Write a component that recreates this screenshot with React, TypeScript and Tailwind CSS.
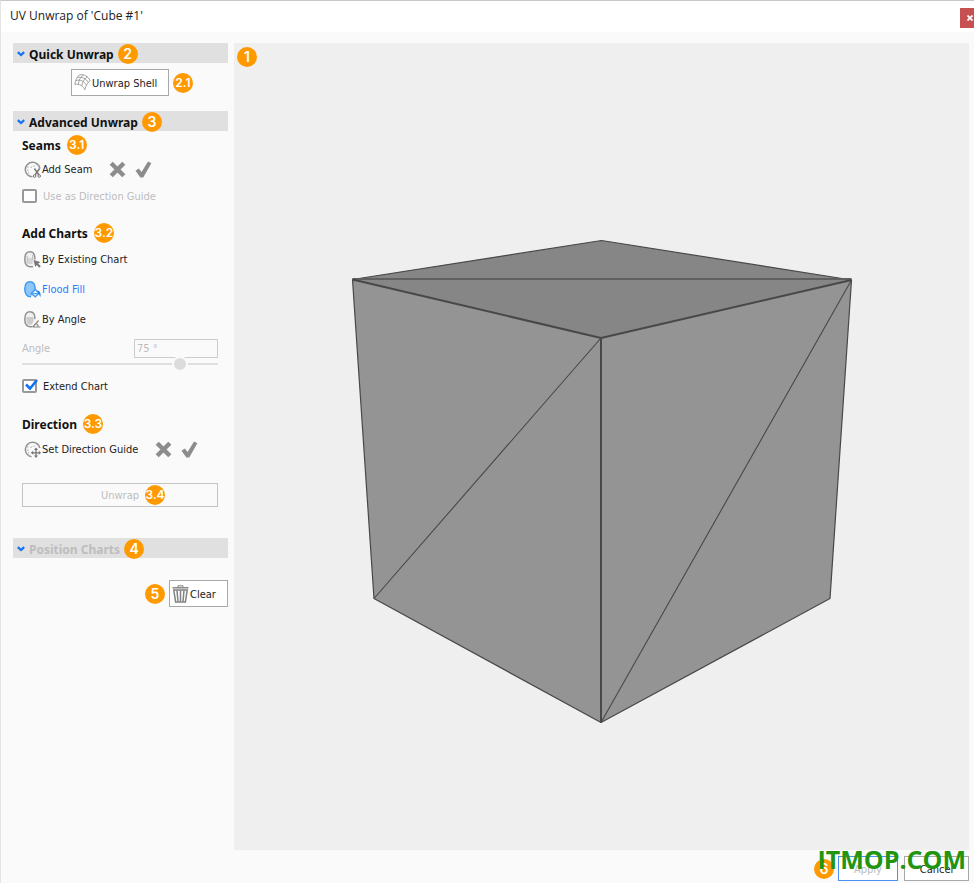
import React from 'react';

const Badge = ({ children, className = '' }: any) => (
  <span className={`inline-flex items-center justify-center shrink-0 w-5 h-5 rounded-full bg-[#ff9900] text-white font-['Inter',sans-serif] font-semibold leading-none ${String(children).length > 1 ? 'text-[12px]' : 'text-[14px]'} ${className}`}>
    {children}
  </span>
);

const SectionHeader = ({ title, badge, disabled, className = '' }: any) => (
  <div className={`flex items-center h-5 pt-0.5 bg-[#e0e0e0] ${className}`}>
    <button className={`flex items-center gap-1 pl-1 font-['Noto_Sans',sans-serif] font-bold text-[12px] ${disabled ? 'text-[#bdbdbd]' : 'text-[#111]'}`}>
      <svg width="8" height="6" viewBox="0 0 8 6" fill="none">
        <path d="M0.8 1.2 L4 4 L7.2 1.2" stroke="#1272f5" strokeWidth="2.2" />
      </svg>
      {title}
    </button>
    <Badge className="ml-1">{badge}</Badge>
  </div>
);

const SubHeading = ({ title, badge, className = '' }: any) => (
  <div className={`flex items-center gap-1.5 h-5 ${className}`}>
    <h3 className="font-['Noto_Sans',sans-serif] font-bold text-[12px]">{title}</h3>
    <Badge>{badge}</Badge>
  </div>
);

const ToolButton = ({ icon, label, active }: any) => (
  <button className={`flex items-center h-6 ml-0.5 gap-px ${active ? 'text-[#2b7cff]' : 'text-[#222]'}`}>
    {icon}
    <span className="pt-px">{label}</span>
  </button>
);

const CheckRow = ({ label, defaultChecked, disabled, className = '' }: any) => (
  <label className={`relative flex items-center gap-1.5 h-5 ${disabled ? 'text-[#bdbdbd]' : 'text-[#222]'} ${className}`}>
    <input type="checkbox" defaultChecked={defaultChecked} disabled={disabled} className="peer appearance-none w-[15px] h-[14px] border-2 border-[#999] rounded-xs bg-white" />
    <svg className="absolute left-0.5 top-0.5 hidden peer-checked:block" width="15" height="14" viewBox="0 0 15 14" fill="none">
      <path d="M2 6.5 L6 10.5 L13 2" stroke="#1272f5" strokeWidth="2.6" />
    </svg>
    <span className="pt-px">{label}</span>
  </label>
);

const CancelAccept = ({ target }: any) => (
  <div className="flex items-center gap-[9px] ml-[17px]">
    <button aria-label={`Discard ${target}`}>
      <svg width="17" height="17" viewBox="0 0 17 17" fill="none">
        <path d="M2.2 2.2 L14.8 14.8 M14.8 2.2 L2.2 14.8" stroke="#8c8c8c" strokeWidth="4.4" />
      </svg>
    </button>
    <button aria-label={`Accept ${target}`}>
      <svg width="17" height="17" viewBox="0 0 17 17">
        <path d="M0.5 9.8 L3.8 7.6 L6.6 11 L13 0.5 L16.4 2.2 L8.2 16.5 L5.4 16.5 Z" fill="#8c8c8c" />
      </svg>
    </button>
  </div>
);

const SeamIcon = () => (
  <svg width="17" height="17" viewBox="0 0 17 17" fill="none">
    <path d="M8.5 15.8 A7.3 7.3 0 1 1 15.8 7.5" stroke="#929292" strokeWidth="1.5" />
    <path d="M5 2.5 C3.2 5.5 3.2 10 5.5 13.5 M6.5 6.5 C9 4.8 11 5.6 12.5 3.6" stroke="#aaa" strokeDasharray="1.5 1.5" />
    <path d="M10.4 7.5 L15 14 M15.6 7.5 L11 14" stroke="#777" strokeWidth="1.5" />
    <circle cx="10.6" cy="15" r="1.3" stroke="#777" />
    <circle cx="15.2" cy="15" r="1.3" stroke="#777" />
  </svg>
);

const DirectionIcon = () => (
  <svg width="17" height="17" viewBox="0 0 17 17" fill="none">
    <path d="M7.5 15.7 A7.3 7.3 0 1 1 15.8 7" stroke="#929292" strokeWidth="1.5" />
    <path d="M5 2.5 C3.2 5.5 3.2 10 5.5 13.5 M6.5 6.5 C9 4.8 11 5.6 12.5 3.6" stroke="#aaa" strokeDasharray="1.5 1.5" />
    <path d="M12 7.5 V16 M7.8 11.8 H16.2" stroke="#777" strokeWidth="1.3" />
    <path d="M12 6.6 L14 9 H10 Z M12 17 L14 14.6 H10 Z M6.8 11.8 L9.2 9.8 V13.8 Z M17 11.8 L14.8 9.8 V13.8 Z" fill="#777" />
  </svg>
);

const ExistingIcon = () => (
  <svg width="17" height="17" viewBox="0 0 17 17" fill="none">
    <path d="M9 15.8 H6 C2.5 15.5 0.8 12.5 0.8 8 C0.8 3 2.8 0.8 6 0.8 C9.2 0.8 11 3 11 8.5" fill="#f0f0f0" stroke="#929292" strokeWidth="1.5" />
    <rect x="3.5" y="7" width="5" height="6" fill="#d5d5d5" />
    <path d="M3.2 5 V12 M8.6 4 V9" stroke="#bbb" />
    <path d="M9.5 9 L16.4 11 L14.1 12.4 L16.8 15.3 L15.2 16.7 L12.8 13.9 L11.2 16 Z" fill="#777" />
  </svg>
);

const FloodIcon = () => (
  <svg width="17" height="17" viewBox="0 0 17 17" fill="none">
    <path d="M7 15.8 C2.5 15.8 0.8 12.5 0.8 8 C0.8 3 2.8 0.8 6 0.8 C9.4 0.8 11 3 11.2 8" fill="#8fc6f8" stroke="#3f9af2" strokeWidth="1.5" />
    <path d="M11.2 8.5 L15 12 L11.3 15.8 L7.2 12.5 Z" fill="#e3f1fe" stroke="#3f9af2" strokeWidth="1.4" />
    <path d="M8.2 12.6 H14" stroke="#3f9af2" />
    <path d="M13 9.5 C15.8 9.8 17 11.8 16.5 16.2 L14.8 13" fill="#1e83ec" />
  </svg>
);

const AngleIcon = () => (
  <svg width="17" height="17" viewBox="0 0 17 17" fill="none">
    <path d="M8.5 15.8 H6 C2.5 15.5 0.8 12.5 0.8 8 C0.8 3 2.8 0.8 6 0.8 C9.2 0.8 11 3 11 8" fill="#f0f0f0" stroke="#929292" strokeWidth="1.5" />
    <path d="M2.4 6 H9.6 V10 L7.5 13.5 H4 C2.8 12 2.4 10 2.4 6 Z" fill="#ccc" />
    <path d="M8.8 16 L14.6 9.5 M8.8 16 H16.5 M12 12.2 C13.6 13 14.2 14.5 14.2 16" stroke="#888" strokeWidth="1.2" />
  </svg>
);

const ShellIcon = () => (
  <svg width="17" height="17" viewBox="0 0 17 17" fill="none" stroke="#999" strokeWidth="0.9">
    <path d="M0.8 10.5 C1.2 7 2.8 3 5.4 0.8 C10 0.2 14 2 16.2 6.8 C13.8 8.2 11.8 11 10.8 15.8 C9.4 12.4 5.4 9.2 0.8 10.5 Z" />
    <path d="M4.4 10.3 C4.6 6.4 6.4 3 9.4 1 M7.8 11.8 C8.2 8.2 10.2 5 13.4 2.8 M1.8 6.6 C6.5 5.2 10.4 7.6 12.3 10.8 M3.2 3.4 C8 2.4 12.2 4.8 14.2 8.2" />
  </svg>
);

const TrashIcon = () => (
  <svg width="17" height="18" viewBox="0 0 17 18" fill="none" stroke="#808080">
    <path d="M0.5 2.8 H16.5" strokeWidth="1.4" />
    <path d="M6 2.2 V0.8 H11 V2.2" />
    <path d="M1.8 5 H15.2 L13.4 17 H3.6 Z" strokeWidth="1.5" />
    <path d="M5 5.5 L6 16.5 M8.5 5.5 V16.5 M12 5.5 L11 16.5" strokeWidth="1.5" />
  </svg>
);

// Perspective cube with its triangulated edges
const CubeView = () => (
  <svg className="w-full h-full" viewBox="0 0 735 807" role="img" aria-label="Cube">
    <path d="M118.5 236.5 L367.5 197.5 L617.5 237 L367 295 Z" fill="#868686" />
    <path d="M118.5 236.5 L367 295 V679.5 L140 555.5 Z" fill="#949494" />
    <path d="M617.5 237 L367 295 V679.5 L596 555.5 Z" fill="#949494" />
    <g fill="none" stroke="#484848" strokeLinejoin="round">
      <path d="M118.5 236.5 L367.5 197.5 L617.5 237 L596 555.5 L367 679.5 L140 555.5 Z" strokeWidth="1.2" />
      <path d="M118.5 236 H617.5" stroke="#606060" strokeWidth="1.8" />
      <path d="M367 295 L140 555.5 M617.5 237 L367 679.5" strokeWidth="1.1" />
      <path d="M118.5 236.5 L367 295 L617.5 237 M367 295 V679.5" strokeWidth="2" />
    </g>
  </svg>
);

export default function App() {
  return (
    <div className="relative flex flex-col min-h-screen overflow-hidden bg-[#fafafa] border-t border-l border-t-[#c8c8c8] border-l-[#e4e4e4] font-['DejaVu_Sans_Condensed','DejaVu_Sans',sans-serif] text-[11px] leading-[17px] text-[#111]">
      <header className="flex items-center justify-between h-[31px] pl-[9px] pb-0.5 bg-white">
        <h1 className="font-['Open_Sans',sans-serif] text-[12px] text-[#222]">UV Unwrap of 'Cube #1'</h1>
        <button aria-label="Close" className="flex items-center justify-end w-[14px] h-5 mt-1 pr-px bg-[#c75050]">
          <svg width="6" height="6" viewBox="0 0 6 6" fill="none">
            <path d="M0.5 0.5 L5.5 5.5 M5.5 0.5 L0.5 5.5" stroke="#fff" strokeWidth="1.8" />
          </svg>
        </button>
      </header>

      <div className="flex flex-1 gap-1.5 pt-[11px] pl-3 pr-[5px]">
        <aside className="w-[215px] shrink-0">
          <SectionHeader title="Quick Unwrap" badge="2" />
          <div className="flex items-center gap-1 mt-1.5 ml-[58px]">
            <button className="flex items-center gap-px h-[27px] w-[98px] pl-0.5 border border-[#a8a8a8] bg-white text-[#222]">
              <ShellIcon />
              <span className="pt-px">Unwrap Shell</span>
            </button>
            <Badge>2.1</Badge>
          </div>

          <SectionHeader title="Advanced Unwrap" badge="3" className="mt-[15px]" />
          <div className="pl-[9px] pr-2.5">
            <SubHeading title="Seams" badge="3.1" className="mt-1" />
            <div className="flex items-center mt-0.5">
              <ToolButton icon={<SeamIcon />} label="Add Seam" />
              <CancelAccept target="seam" />
            </div>
            <CheckRow label="Use as Direction Guide" disabled className="mt-[5px]" />

            <SubHeading title="Add Charts" badge="3.2" className="mt-[17px]" />
            <div className="flex flex-col items-start gap-1.5 mt-1">
              <ToolButton icon={<ExistingIcon />} label="By Existing Chart" />
              <ToolButton icon={<FloodIcon />} label="Flood Fill" active />
              <ToolButton icon={<AngleIcon />} label="By Angle" />
            </div>
            <div className="flex items-center justify-between mt-[7px] h-5 text-[#bdbdbd]">
              <label htmlFor="angle" className="pt-px">Angle</label>
              <input id="angle" type="text" defaultValue="75 °" disabled className="w-[84px] h-[19px] px-0.5 border border-[#ccc] bg-[#fafafa] text-[#bdbdbd]" />
            </div>
            <input
              type="range"
              aria-label="Angle slider"
              min={0}
              max={90}
              defaultValue={75}
              disabled
              className="block w-full h-3 appearance-none bg-transparent [&::-webkit-slider-runnable-track]:h-0.5 [&::-webkit-slider-runnable-track]:bg-[#e0e0e0] [&::-webkit-slider-thumb]:appearance-none [&::-webkit-slider-thumb]:w-4 [&::-webkit-slider-thumb]:h-4 [&::-webkit-slider-thumb]:-mt-[7px] [&::-webkit-slider-thumb]:rounded-full [&::-webkit-slider-thumb]:border-2 [&::-webkit-slider-thumb]:border-[#fafafa] [&::-webkit-slider-thumb]:bg-[#dcdcdc]"
            />
            <CheckRow label="Extend Chart" defaultChecked className="mt-1.5" />

            <SubHeading title="Direction" badge="3.3" className="mt-[18px]" />
            <div className="flex items-center mt-[3px]">
              <ToolButton icon={<DirectionIcon />} label="Set Direction Guide" />
              <CancelAccept target="direction guide" />
            </div>
            <div className="relative mt-[22px]">
              <button disabled className="block w-full h-6 pt-px border border-[#c4c4c4] text-[#bdbdbd]">Unwrap</button>
              <Badge className="absolute top-0.5 left-[123px]">3.4</Badge>
            </div>
          </div>

          <SectionHeader title="Position Charts" badge="4" disabled className="mt-[31px]" />
          <div className="flex items-center justify-end gap-1 mt-[22px]">
            <Badge>5</Badge>
            <button className="flex items-center gap-px h-[27px] w-[59px] pl-0.5 border border-[#a8a8a8] bg-white text-[#222]">
              <TrashIcon />
              <span className="pt-px">Clear</span>
            </button>
          </div>
        </aside>

        <main className="relative flex-1 bg-[#efefef]">
          <CubeView />
          <Badge className="absolute top-1 left-[3px]">1</Badge>
        </main>
      </div>

      <footer className="flex items-center justify-end gap-1 h-[33px] pt-1 pr-[5px]">
        <Badge>6</Badge>
        <button disabled className="w-[60px] h-[25px] pt-px border border-[#4a90f0] bg-white text-[#bdbdbd]">Apply</button>
        <button className="w-[65px] h-[25px] ml-0.5 pt-px border border-[#a8a8a8] bg-white text-[#222]">Cancel</button>
      </footer>
      <div className="absolute bottom-2 right-2 font-['Open_Sans',sans-serif] font-bold text-[25px] leading-8 text-[#219410] pointer-events-none">ITMOP.COM</div>
    </div>
  );
}
